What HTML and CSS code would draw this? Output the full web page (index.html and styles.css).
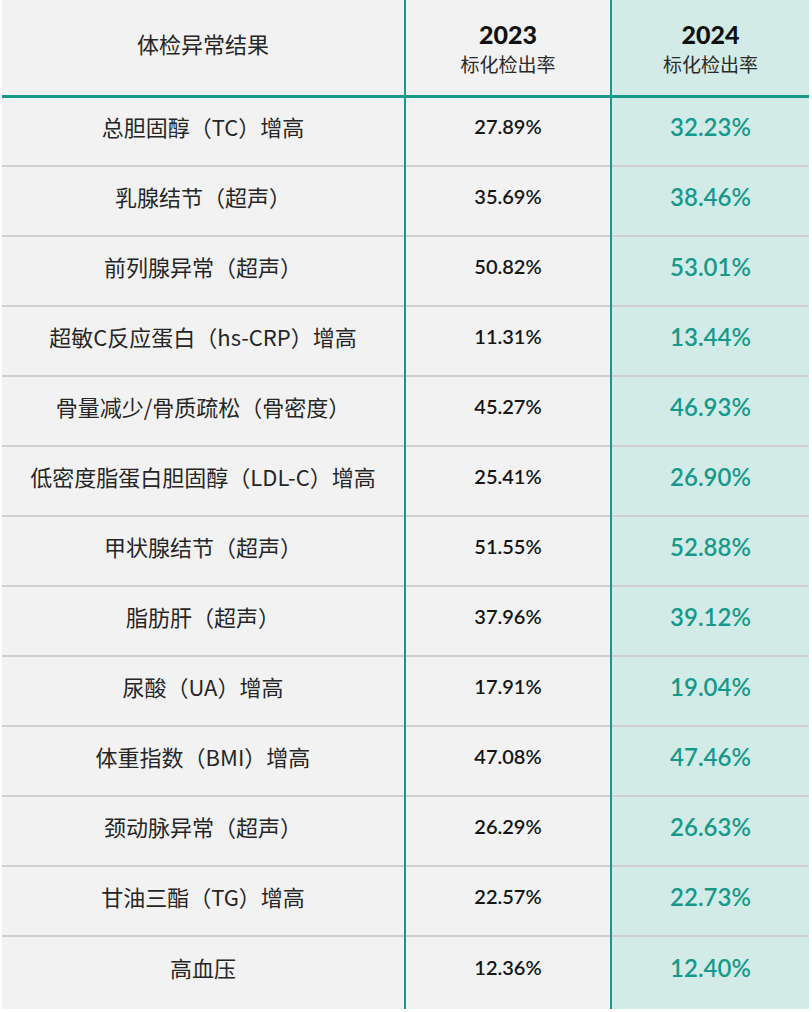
FILE: index.html
```html
<!DOCTYPE html>
<html lang="zh">
<head>
<meta charset="utf-8">
<title>体检异常结果</title>
<link rel="stylesheet" href="styles.css">
</head>
<body>
<table class="sheet">
  <colgroup>
    <col class="c-name">
    <col class="c-old">
    <col class="c-new">
  </colgroup>
  <thead>
    <tr class="head">
      <th class="name-h">体检异常结果</th>
      <th class="year-h"><span class="year">2023</span><span class="sub">标化检出率</span></th>
      <th class="year-h hl"><span class="year">2024</span><span class="sub">标化检出率</span></th>
    </tr>
  </thead>
  <tbody>
    <tr><td class="name">总胆固醇（TC）增高</td><td class="old">27.89%</td><td class="new hl">32.23%</td></tr>
    <tr><td class="name">乳腺结节（超声）</td><td class="old">35.69%</td><td class="new hl">38.46%</td></tr>
    <tr><td class="name">前列腺异常（超声）</td><td class="old">50.82%</td><td class="new hl">53.01%</td></tr>
    <tr><td class="name">超敏C反应蛋白（hs-CRP）增高</td><td class="old">11.31%</td><td class="new hl">13.44%</td></tr>
    <tr><td class="name">骨量减少/骨质疏松（骨密度）</td><td class="old">45.27%</td><td class="new hl">46.93%</td></tr>
    <tr><td class="name">低密度脂蛋白胆固醇（LDL-C）增高</td><td class="old">25.41%</td><td class="new hl">26.90%</td></tr>
    <tr><td class="name">甲状腺结节（超声）</td><td class="old">51.55%</td><td class="new hl">52.88%</td></tr>
    <tr><td class="name">脂肪肝（超声）</td><td class="old">37.96%</td><td class="new hl">39.12%</td></tr>
    <tr><td class="name">尿酸（UA）增高</td><td class="old">17.91%</td><td class="new hl">19.04%</td></tr>
    <tr><td class="name">体重指数（BMI）增高</td><td class="old">47.08%</td><td class="new hl">47.46%</td></tr>
    <tr><td class="name">颈动脉异常（超声）</td><td class="old">26.29%</td><td class="new hl">26.63%</td></tr>
    <tr><td class="name">甘油三酯（TG）增高</td><td class="old">22.57%</td><td class="new hl">22.73%</td></tr>
    <tr class="last"><td class="name">高血压</td><td class="old">12.36%</td><td class="new hl">12.40%</td></tr>
  </tbody>
</table>
</body>
</html>
```

FILE: styles.css
```css
html, body {
  margin: 0;
  padding: 0;
  background: #ffffff;
}

body {
  font-family: "Lato", "Noto Sans CJK SC", sans-serif;
  color: #1e1e1e;
}

.sheet {
  margin-left: 2px;
  width: 807px;
  table-layout: fixed;
  border-collapse: collapse;
  background: #f2f2f2;
}

.c-name { width: 403px; }
.c-old { width: 206px; }
.c-new { width: 198px; }

th, td {
  padding: 0;
  text-align: center;
  vertical-align: middle;
}

.head {
  height: 96px;
  border-bottom: 3px solid #16998a;
}

tbody tr {
  height: 70px;
  border-bottom: 2px solid #cfcfcf;
}

tbody tr.last {
  border-bottom: none;
  height: 73px;
}

.year-h, .old, .new {
  border-left: 2px solid #16998a;
}

.hl {
  background: #d2ebe7;
}

.name-h {
  font-family: "Noto Sans CJK SC", sans-serif;
  font-weight: 400;
  font-size: 22px;
  color: #262626;
  padding-bottom: 8px;
}

.year-h {
  padding-top: 4px;
}

.year {
  display: block;
  font-family: "Lato", sans-serif;
  font-weight: 900;
  font-size: 25px;
  line-height: 30px;
  color: #111111;
}

.sub {
  display: block;
  font-family: "Noto Sans CJK SC", sans-serif;
  font-weight: 400;
  font-size: 19px;
  line-height: 30px;
  color: #2a2a2a;
}

.name {
  font-family: "Noto Sans CJK SC", sans-serif;
  font-size: 22px;
  color: #262626;
  padding-bottom: 10px;
}

.old {
  font-family: "Lato", sans-serif;
  font-weight: 600;
  font-size: 20px;
  color: #161616;
  padding-bottom: 10px;
}

.new {
  font-family: "Lato", sans-serif;
  font-weight: 600;
  font-size: 24px;
  color: #17998a;
  padding-bottom: 10px;
}

tbody tr.last td {
  padding-bottom: 12px;
}
```
